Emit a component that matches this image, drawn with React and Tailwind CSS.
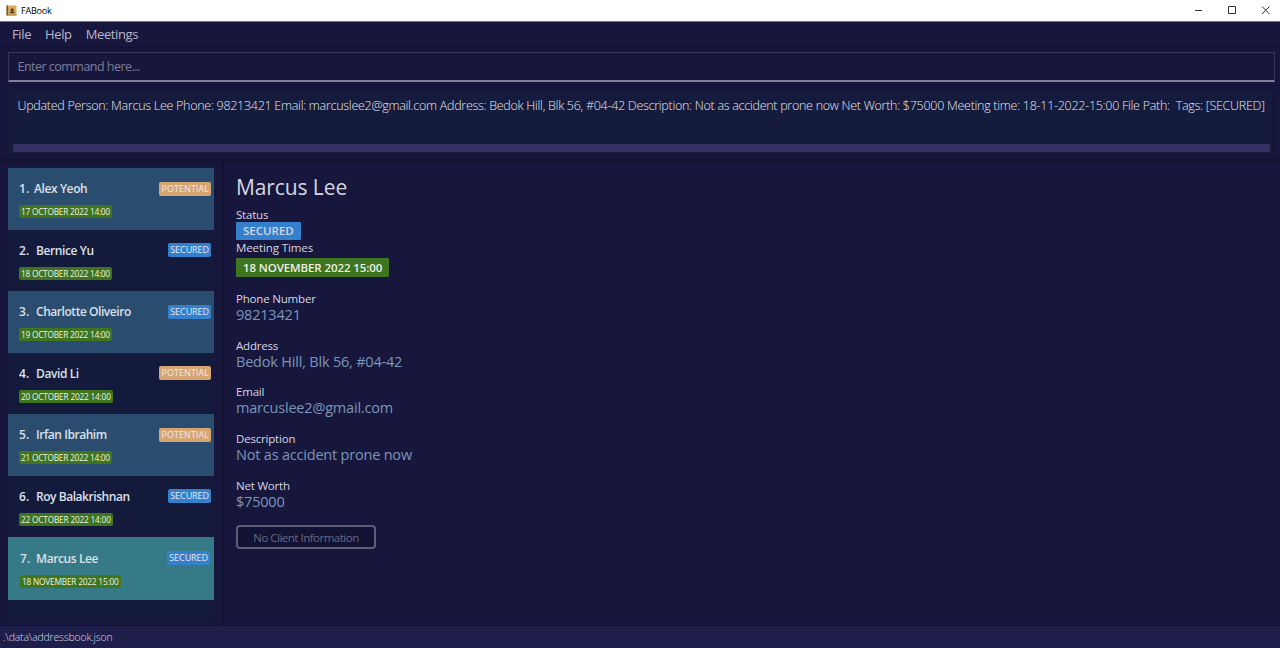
const clients = [
  { name: 'Alex Yeoh', tag: 'POTENTIAL', time: '17 OCTOBER 2022 14:00' },
  { name: 'Bernice Yu', tag: 'SECURED', time: '18 OCTOBER 2022 14:00' },
  { name: 'Charlotte Oliveiro', tag: 'SECURED', time: '19 OCTOBER 2022 14:00' },
  { name: 'David Li', tag: 'POTENTIAL', time: '20 OCTOBER 2022 14:00', wide: true },
  { name: 'Irfan Ibrahim', tag: 'POTENTIAL', time: '21 OCTOBER 2022 14:00' },
  { name: 'Roy Balakrishnan', tag: 'SECURED', time: '22 OCTOBER 2022 14:00', wide: true },
  { name: 'Marcus Lee', tag: 'SECURED', time: '18 NOVEMBER 2022 15:00', selected: true },
];

const details = [
  ['Phone Number', '98213421'],
  ['Address', 'Bedok Hill, Blk 56, #04-42'],
  ['Email', 'marcuslee2@gmail.com'],
  ['Description', 'Not as accident prone now'],
  ['Net Worth', '$75000'],
];

function TitleBar() {
  return (
    <header className="flex h-[22px] shrink-0 items-center border-b border-[#77778c] bg-white text-black">
      <svg className="ml-[6px] h-[11px] w-[11px]" viewBox="0 0 11 11">
        <rect x="0.5" y="0.5" width="10" height="10" rx="0.6" fill="#d9ad5c" />
        <rect x="0.5" y="0.5" width="1.6" height="10" fill="#6b5a44" />
        <path d="M3.8 8.3V7.2l1.5-.9a1.6 1.6 0 1 1 1.8 0l1.5.9v1.1z" fill="#5b4424" />
        <path d="M2 10.1h8.5" stroke="#a87d38" strokeWidth="0.8" />
      </svg>
      <span className="ml-[4px] text-[9px] leading-[12px] tracking-[-0.2px]">FABook</span>
      <svg className="ml-auto mr-[10px] h-[12px] w-[78px]" viewBox="0 0 78 12" fill="none" stroke="#333" strokeWidth="1">
        <path d="M3 5.5h7" />
        <path d="M36.5 1.5h7v7h-7z" />
        <path d="M70 1.5l7.5 7.5M77.5 1.5L70 9" />
      </svg>
    </header>
  );
}

function ClientRow({ index, client }) {
  const background = client.selected
    ? 'h-[63px] bg-[#367a87] pt-[12.5px] pl-[12px] pr-[4px]'
    : index % 2 === 0
      ? 'h-[61.5px] bg-[#2a4c6e] pt-[12px] pl-[11px] pr-[3px]'
      : 'h-[61.5px] bg-[#141a3b] pt-[12px] pl-[11px] pr-[3px]';
  const timeTracking = client.selected || client.wide ? 'tracking-[-0.2px]' : 'tracking-[-0.24px]';
  return (
    <li className={`shrink-0 ${background}`}>
      <div className="flex h-[18px] items-center text-[12px] font-semibold leading-[18px] text-[#dce0ea]">
        <span className={index === 0 ? 'w-[15px]' : client.selected ? 'w-[16px]' : 'w-[17px]'}>{index + 1}.</span>
        <span className={client.name.length > 12 ? 'tracking-[-0.45px]' : 'tracking-[-0.4px]'}>{client.name}</span>
        <span
          className={`-mt-px ml-auto h-[14px] rounded-[2px] px-[2px] text-[9px] font-normal leading-[14px] text-[#e6e9f0] ${
            client.tag === 'SECURED' ? 'bg-[#3580cd] tracking-[-0.07px]' : 'bg-[#d6a572] tracking-[0.06px]'
          }`}
        >
          {client.tag}
        </span>
      </div>
      <div className="mt-[7px] flex">
        <span
          className={`h-[13px] rounded-[2px] bg-[#3f751e] px-[2px] text-[8.3px] leading-[13px] text-[#eef0ea] ${timeTracking}`}
        >
          {client.time}
        </span>
      </div>
    </li>
  );
}

export default function App() {
  return (
    <div className="flex h-[648px] w-[1280px] flex-col overflow-hidden whitespace-nowrap bg-[#17173d] font-['Open_Sans','Noto_Sans',sans-serif]">
      <TitleBar />
      <nav className="flex h-[25px] shrink-0 items-center gap-[14px] pl-[12px] text-[13px] leading-[25px] tracking-[-0.38px] text-[#b9b9ca]">
        <span>File</span>
        <span>Help</span>
        <span>Meetings</span>
      </nav>
      <section className="h-[39px] shrink-0 border-y border-[#111130] pl-[8px] pr-[5px] pt-[4px]">
        <div className="h-[30px] border border-b-2 border-[#37375a] border-b-[#82829b] pl-[8.5px] text-[12.5px] leading-[28px] tracking-[-0.52px] text-[#7d7d94]">
          Enter command here...
        </div>
      </section>
      <section className="h-[75px] shrink-0 border-b-2 border-[#111130] pl-[8px] pr-[7px] pt-[4px]">
        <div className="flex h-[65px] flex-col border border-[#141636] bg-[#151b3d] pl-[4px] pr-[2px]">
          <p className="pl-[4.5px] pt-[5px] text-[12.5px] font-light leading-[20px] tracking-[-0.28px] text-[#e6e6ee]">
            Updated Person: Marcus Lee Phone: 98213421 Email: marcuslee2@gmail.com Address: Bedok Hill, Blk 56, #04-42
            Description: Not as accident prone now Net Worth: $75000 Meeting time: 18-11-2022-15:00 File Path: &nbsp;Tags:
            [SECURED]
          </p>
          <div className="mb-[2px] mt-auto h-[8px] rounded-[2px] bg-[#343164]" />
        </div>
      </section>
      <main className="flex h-[464px] shrink-0">
        <aside className="w-[224px] shrink-0 border-r-2 border-[#111130] pl-[8px] pt-[7px]">
          <ul className="flex h-[450px] w-[206px] flex-col bg-[#141a3b]">
            {clients.map((client, i) => (
              <ClientRow key={client.name} index={i} client={client} />
            ))}
          </ul>
        </aside>
        <article className="flex flex-col items-start pl-[12px] pt-[11px] text-[#d6d6e1]">
          <h1 className="h-[35px] text-[21px] leading-[30px] tracking-[-0.1px]">Marcus Lee</h1>
          <span className="h-[15px] text-[11.5px] leading-[16px] tracking-[-0.2px]">Status</span>
          <span className="h-[18px] rounded-[1px] bg-[#3580cd] px-[7px] text-[11.5px] font-semibold leading-[18px]">SECURED</span>
          <span className="h-[18px] text-[11.5px] leading-[16px] tracking-[-0.1px]">Meeting Times</span>
          <span className="mb-[14px] h-[19px] rounded-[1px] bg-[#3f751e] px-[7px] text-[11.5px] font-semibold leading-[19px] tracking-[-0.1px] text-[#eef0ea]">
            18 NOVEMBER 2022 15:00
          </span>
          <dl>
            {details.map(([label, value]) => (
              <div key={label} className="h-[46.7px]">
                <dt className="text-[11.5px] leading-[16px] tracking-[-0.19px]">{label}</dt>
                <dd className="text-[14.5px] leading-[16px] tracking-[-0.2px] text-[#7c95b8]">{value}</dd>
              </div>
            ))}
          </dl>
          <button className="mt-px h-[24px] w-[140px] rounded-[4px] border-2 border-[#5e5e7a] bg-[#121235] text-[11.5px] leading-[21px] tracking-[-0.5px] text-[#68687f]">
            No Client Information
          </button>
        </article>
      </main>
      <footer className="h-[23px] shrink-0 border-t border-[#0f0f30] bg-[#1e1e4b] pl-[3px] text-[10.5px] font-light leading-[23px] tracking-[-0.2px] text-[#d8d8e4]">
        .\data\addressbook.json
      </footer>
    </div>
  );
}
